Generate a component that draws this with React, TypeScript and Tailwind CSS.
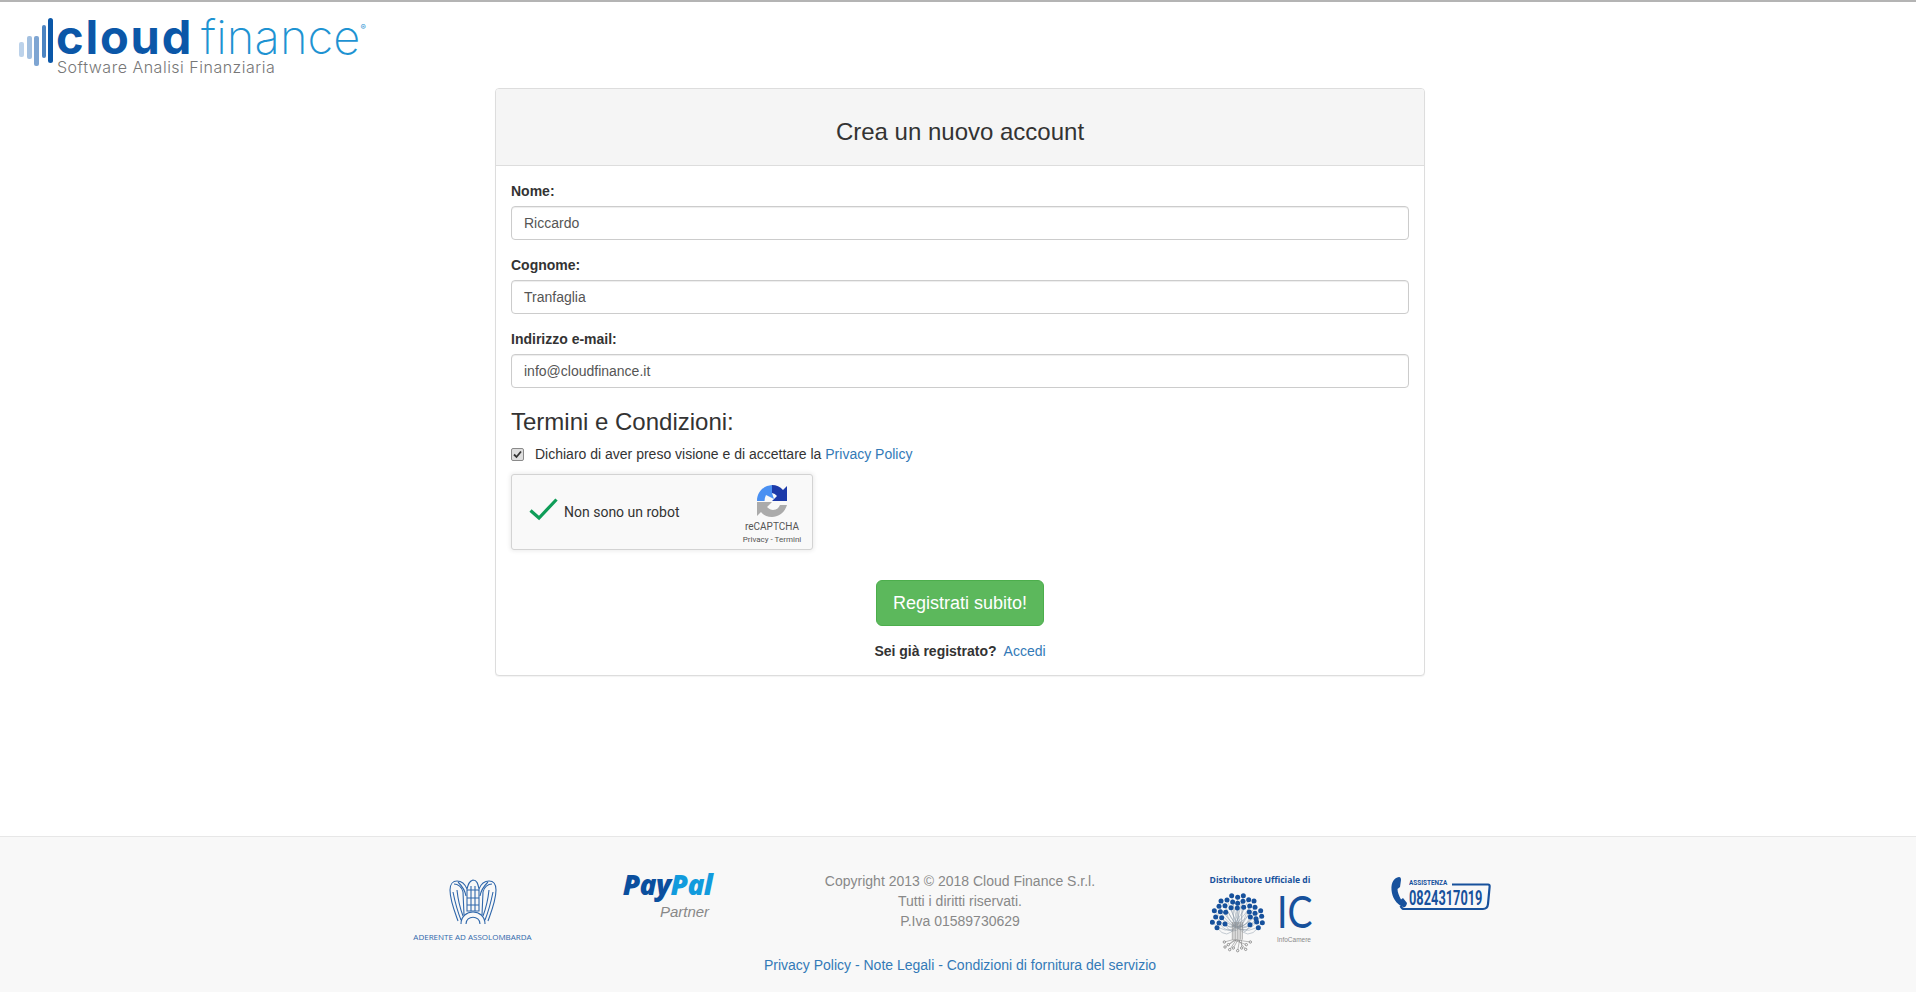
const font = "font-['Liberation_Sans',Arial,sans-serif]";

function LogoBars() {
  return (
    <svg width="36" height="50" viewBox="0 0 36 50" className="shrink-0">
      <rect x="1" y="25" width="5" height="15" rx="2" fill="#bcd2ea" />
      <rect x="9" y="19" width="5" height="23" rx="2" fill="#a3c0e0" />
      <rect x="16" y="19" width="5" height="30" rx="2" fill="#7ea5d2" />
      <rect x="24" y="8" width="4" height="33" rx="2" fill="#4c84c1" />
      <rect x="30" y="1" width="5" height="45" rx="2.500" fill="#0b57a8" />
    </svg>
  );
}

function Field({ label, value }: { label: string; value: string }) {
  return (
    <div className="mb-[15px]">
      <label className="block mb-[5px] h-5 text-[14px] leading-5 font-bold text-[#333]">{label}</label>
      <div className="h-[34px] border border-[#ccc] rounded px-3 text-[14px] leading-8 text-[#555] shadow-[inset_0_1px_1px_rgba(0,0,0,0.075)]">{value}</div>
    </div>
  );
}

function Recaptcha() {
  return (
    <div className="w-[302px] h-[76px] border border-[#d3d3d3] rounded-[3px] bg-[#f9f9f9] shadow-[0_0_4px_1px_rgba(0,0,0,0.08)] flex items-center font-['Roboto',sans-serif]">
      <svg width="30" height="24" viewBox="0 0 30 24" className="ml-[17px] mr-[5px] shrink-0 -mt-[6px]">
        <path d="M1.5 13.5 L10 21 L27.5 2.5" fill="none" stroke="#0f9d58" strokeWidth="3.2" />
      </svg>
      <span className="text-[14px] text-[#333] flex-1">Non sono un robot</span>
      <div className="w-[64px] mr-[8px] mt-[7px] flex flex-col items-center shrink-0">
        <svg width="30" height="32" viewBox="0 0 30 32" className="mb-[3px]">
          <path d="M15 0 A15 15 0 0 1 26 5 L30 1 V16 H15 L20 11 A8 8 0 0 0 15 8 Z" fill="#1c3aa9" />
          <path d="M0 16 C0 8 5 3 10 1 L15 0 V8 L17 14 L9 10 C8 12 7.5 14 7.5 16 Z" fill="#4a90f2" />
          <path d="M0 17 H15 L10 22 C12 24 14 25 16 25 C19 25 22 23 23 20 H30 C28 27 22 32 15 32 C10 32 6 30 4 27 L0 31 Z" fill="#ababab" />
        </svg>
        <div className="text-[10px] leading-[13px] text-[#555]">reCAPTCHA</div>
        <div className="text-[8px] leading-[13px] text-[#555] whitespace-nowrap">Privacy - Termini</div>
      </div>
    </div>
  );
}

function Eagle() {
  const c = "#2f67ab";
  return (
    <svg width="48" height="48" viewBox="0 0 48 48" fill="none" stroke={c} strokeWidth="1.1">
      <path d="M1 12 C1 6 4 3 8 3 C12 3 16 6 18 11 C19 7 20 3 24 2 C28 2 29 6 30 11 C32 6 36 3 40 3 C44 3 47 6 47 12 C47 22 43 32 39 43" />
      <path d="M1 12 C1 22 5 32 9 43" />
      <path d="M5 6 C9 6 13 9 14 14 L15 37 M9 4 C13 8 16 12 17 18 M4 14 C6 24 8 32 12 42 M8 12 C9 22 11 30 14 38" />
      <path d="M43 6 C39 6 35 9 34 14 L33 37 M39 4 C35 8 32 12 31 18 M44 14 C42 24 40 32 36 42 M40 12 C39 22 37 30 34 38" />
      <path d="M18 12 H30 V33 H18 Z M22 8 V33 M26 8 V33 M18 20 H30 M18 27 H30" />
      <path d="M12 46 C12 30 36 30 36 46 M17 46 C17 37 31 37 31 46" />
    </svg>
  );
}

const treeDots: [number, number][] = [
  [80,33],[98,38],[115,33],[48,49],[66,46],[83,52],[98,56],[114,50],[131,45],[147,49],
  [42,65],[60,63],[78,69],[97,70],[116,68],[134,64],[150,68],[28,78],[46,81],[62,83],[133,82],[150,86],[167,78],
  [32,97],[50,99],[136,97],[153,102],[170,95],[22,113],[42,115],[60,118],[135,120],[155,112],[172,114],[36,129],[160,129],
];
const rootDots: [number, number][] = [
  [58,172],[70,180],[60,187],[85,190],[98,198],[110,190],[124,180],[136,172],[74,195],[122,194],
];

function Tree() {
  return (
    <svg width="55" height="60" viewBox="15 25 165 180" className="shrink-0">
      <g stroke="#8d9aa8" strokeWidth="1.5" fill="none">
        {treeDots.map(([x, y], i) => (
          <path key={i} d={`M${84 + (i % 8) * 4} 125 Q${(x + 97) / 2} ${y + 40} ${x} ${y}`} />
        ))}
      </g>
      <g stroke="#8a8a8a" strokeWidth="2">
        {[82, 87, 92, 97, 102, 107, 112].map((x) => (
          <path key={x} d={`M${x} 112 V165`} />
        ))}
      </g>
      <g stroke="#777" strokeWidth="1.5" fill="none">
        {rootDots.map(([x, y], i) => (
          <path key={i} d={`M${84 + (i % 6) * 5} 165 L${x} ${y}`} />
        ))}
      </g>
      {treeDots.map(([x, y], i) => (
        <circle key={i} cx={x} cy={y} r="7.5" fill="#17519c" />
      ))}
      {rootDots.map(([x, y], i) => (
        <circle key={i} cx={x} cy={y} r="3.6" fill="#f8f8f8" stroke="#777" strokeWidth="2.2" />
      ))}
    </svg>
  );
}

function Phone() {
  return (
    <svg width="100" height="34" viewBox="0 0 100 34" className="block" fill="none">
      <path d="M8 0 C3 1 0 5 0.5 13 C1 20 5 27 12 30 C14 31 15.5 29 16 26 L12 21 L10 22.5 C8 19 6.5 15 6.5 12 L9 10 L10 3 C10 1 9.5 0 8 0 Z" fill="#17519c" />
      <path d="M61 7.5 H97 Q99 7.5 98.6 10 L97 27 Q96.5 32 92 32 H13 Q11 32 9.500 29" stroke="#17519c" strokeWidth="2.2" />
    </svg>
  );
}

export default function App() {
  return (
    <div className={`${font} min-h-screen h-[992px] flex flex-col bg-white text-[#333] text-[14px] leading-5`}>
      <div className="h-[2px] bg-[#b4b4b4] shrink-0" />
      <header className="h-[86px] shrink-0 pl-[18px] pt-[15px]">
        <div className="flex items-start">
          <LogoBars />
          <div className="ml-[2px] mt-[1px]">
            <div className="flex items-baseline h-[38px] font-['Inter',sans-serif] text-[47px] leading-[38px]">
              <span className="font-bold text-[#0b57a8] tracking-[1.8px]">cloud</span>
              <span className="font-extralight text-[#1e93d2] ml-[8px] tracking-[0.1px]">finance</span>
              <span className="text-[8px] leading-none text-[#1e93d2] self-start mt-[5px]">®</span>
            </div>
            <div className="font-['Inter',sans-serif] font-light text-[16px] leading-4 tracking-[0.5px] text-[#777] mt-[3px] ml-[1px]">Software Analisi Finanziaria</div>
          </div>
        </div>
      </header>

      <main className="flex-1 flex justify-center pl-[4px]">
        <section className="w-[930px] h-[588px] border border-[#ddd] rounded bg-white shadow-[0_1px_1px_rgba(0,0,0,0.05)]">
          <div className="h-[77px] pt-[10px] bg-[#f5f5f5] border-b border-[#ddd] rounded-t-[3px] flex items-center justify-center text-[24px] leading-[26px]">
            Crea un nuovo account
          </div>
          <div className="px-[15px] pt-[15px]">
            <Field label="Nome:" value="Riccardo" />
            <Field label="Cognome:" value="Tranfaglia" />
            <Field label="Indirizzo e-mail:" value="info@cloudfinance.it" />
            <h3 className="text-[24px] leading-[26px] mb-[9px] font-normal pt-[6px]">Termini e Condizioni:</h3>
            <div className="flex items-center h-5 mb-[10px]">
              <span className="w-[13px] h-[13px] border border-[#8a8a8a] rounded-[2px] bg-[#dedede] flex items-center justify-center shrink-0">
                <svg width="9" height="9" viewBox="0 0 9 9"><path d="M1 4.500 L3.500 7 L8 1.500" fill="none" stroke="#333" strokeWidth="1.8" /></svg>
              </span>
              <span className="ml-[11px]">Dichiaro di aver preso visione e di accettare la <a className="text-[#337ab7]">Privacy Policy</a></span>
            </div>
            <Recaptcha />
            <div className="flex justify-center mt-[30px]">
              <button className="h-[46px] w-[168px] bg-[#5cb85c] border border-[#4cae4c] rounded-md text-white text-[18px] leading-[24px]">Registrati subito!</button>
            </div>
            <div className="text-center mt-[15px]">
              <b>Sei già registrato?</b>&nbsp; <a className="text-[#337ab7]">Accedi</a>
            </div>
          </div>
        </section>
      </main>

      <footer className="h-[156px] shrink-0 bg-[#f8f8f8] border-t border-[#e7e7e7] flex flex-col items-center pl-[4px]">
        <div className="w-[1170px] grid grid-cols-[195px_195px_390px_195px_195px] h-[118px]">
          <div className="flex flex-col items-center pt-[41px]">
            <Eagle />
            <div className="text-[8px] leading-3 mt-[5px] text-[#2f67ab] font-['Open_Sans',sans-serif] whitespace-nowrap">ADERENTE AD ASSOLOMBARDA</div>
          </div>
          <div className="flex flex-col items-center pt-[32px]">
            <div className="text-[28px] leading-[30px] font-extrabold italic font-['Open_Sans',sans-serif] tracking-[-0.6px]">
              <span className="text-[#0b4f9e]">Pay</span><span className="text-[#119bdd]">Pal</span>
            </div>
            <div className="text-[15px] leading-4 italic text-[#888] ml-[34px] mt-[5px]">Partner</div>
          </div>
          <div className="text-center text-[#888] text-[14px] leading-5 pt-[34px]">
            <div>Copyright 2013 © 2018 Cloud Finance S.r.l.</div>
            <div>Tutti i diritti riservati.</div>
            <div>P.Iva 01589730629</div>
          </div>
          <div className="flex flex-col items-center pl-[15px] pt-[37px]">
            <div className="text-[8.6px] leading-3 font-bold text-[#17519c] font-['Open_Sans',sans-serif] whitespace-nowrap">Distributore Ufficiale di</div>
            <div className="flex mt-[7px] w-[100px]">
              <Tree />
              <div className="ml-[12px] -mt-[4px] flex flex-col">
                <div className="text-[44px] leading-[44px] text-[#17519c] font-['Lato',sans-serif] font-normal scale-x-[0.85] origin-left">IC</div>
                <div className="text-[6.500px] leading-[8px] text-[#888] whitespace-nowrap mt-[3px]">InfoCamere</div>
              </div>
            </div>
          </div>
          <div className="flex justify-center pr-[14px] pt-[40px]">
            <div className="relative w-[100px] h-[34px]">
              <Phone />
              <div className="absolute left-[18px] top-[2px] text-[8px] leading-[8px] font-bold text-[#17519c] font-['Roboto',sans-serif] scale-x-[0.8] origin-left whitespace-nowrap">ASSISTENZA</div>
              <div className="absolute left-[18px] top-[11px] text-[20px] leading-[20px] font-bold text-[#17519c] font-['Roboto',sans-serif] scale-x-[0.64] origin-left whitespace-nowrap">0824317019</div>
            </div>
          </div>
        </div>
        <div className="text-[#337ab7] text-[14px] leading-5">
          Privacy Policy - Note Legali - Condizioni di fornitura del servizio
        </div>
      </footer>
    </div>
  );
}
